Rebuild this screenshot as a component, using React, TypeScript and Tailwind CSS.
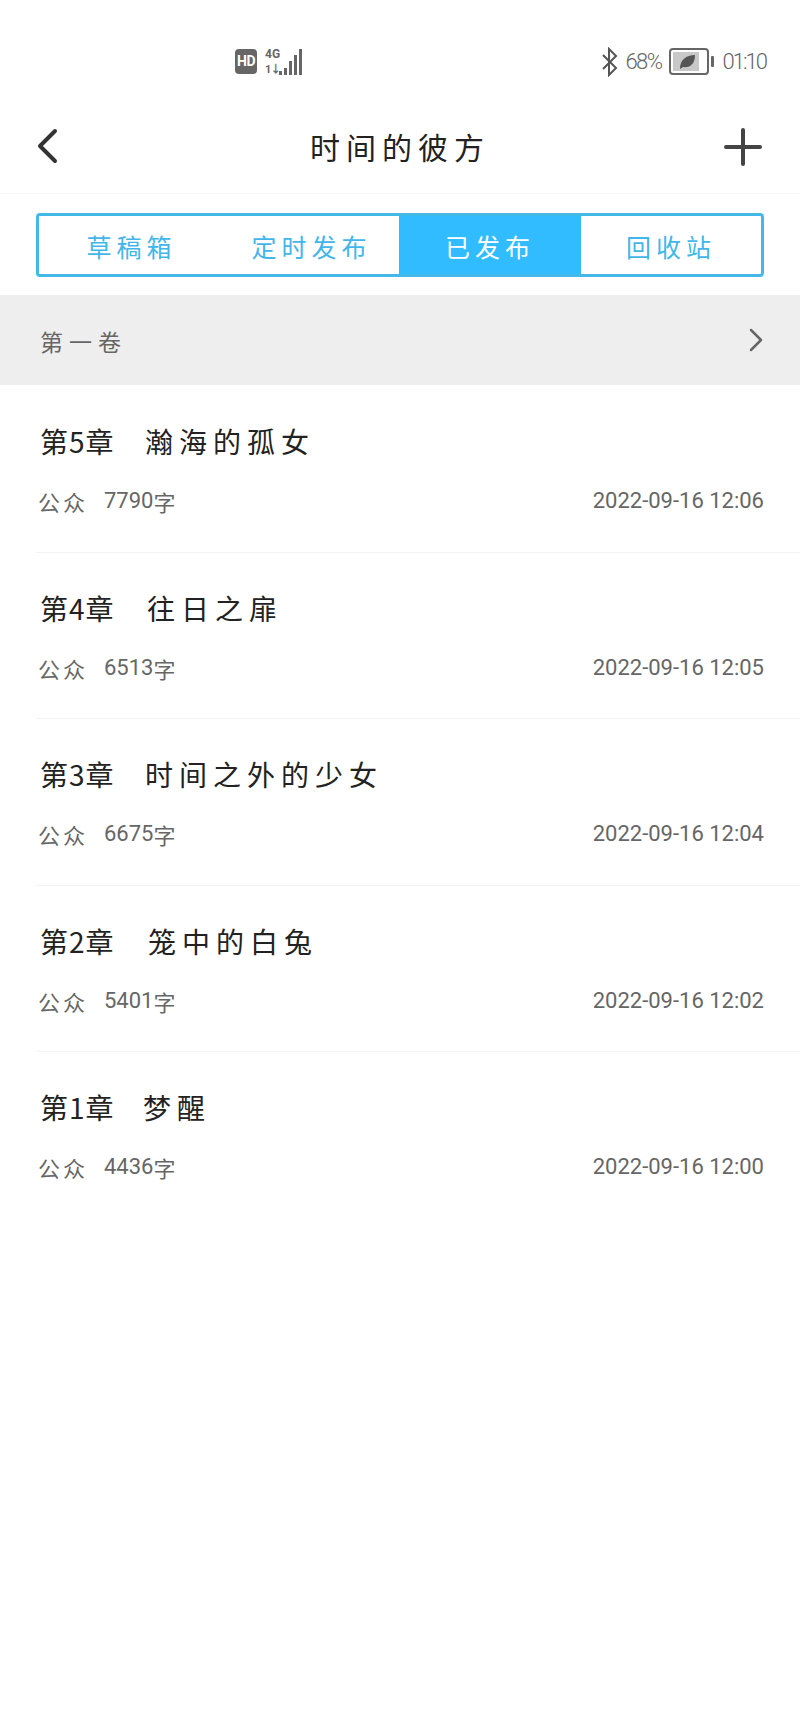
const rows = [
  { no: "第5章", w: "w-[105px]", name: "瀚海的孤女", count: "7790", date: "2022-09-16 12:06" },
  { no: "第4章", w: "w-[107px]", name: "往日之扉", count: "6513", date: "2022-09-16 12:05" },
  { no: "第3章", w: "w-[105px]", name: "时间之外的少女", count: "6675", date: "2022-09-16 12:04" },
  { no: "第2章", w: "w-[108px]", name: "笼中的白兔", count: "5401", date: "2022-09-16 12:02" },
  { no: "第1章", w: "w-[103px]", name: "梦醒", count: "4436", date: "2022-09-16 12:00" },
];

function StatusBar() {
  return (
    <div className="h-[94px] flex items-start justify-between pt-[47px] pl-[235px] pr-[34px] text-[#666]">
      <div className="flex items-center gap-[8px] h-[29px]">
        <span className="w-[22px] h-[25px] rounded-[4px] bg-[#666] text-white text-[14px] font-bold leading-[25px] text-center tracking-[-0.5px]">HD</span>
        <div className="relative w-[37px] h-[28px]">
          <span className="absolute left-0 top-[-1px] text-[12px] font-bold leading-[14px] text-[#666]">4G</span>
          <span className="absolute left-0 top-[15px] text-[11px] font-bold leading-[13px] tracking-[-1px] text-[#666]">1↓</span>
          <svg className="absolute left-0 top-0" width="37" height="28" viewBox="0 0 37 28" fill="#666">
            <rect x="14" y="23" width="3" height="4" />
            <rect x="19" y="20" width="3" height="7" />
            <rect x="24" y="13" width="3" height="14" />
            <rect x="29" y="7" width="3" height="20" />
            <rect x="34" y="1" width="3" height="26" />
          </svg>
        </div>
      </div>
      <div className="flex items-center h-[29px]">
        <svg width="18" height="30" viewBox="0 0 18 30" fill="none" stroke="#555" strokeWidth="2">
          <path d="M2 8 L15 21 L8 28 V2 L15 9 L2 22" />
        </svg>
        <span className="ml-[6px] text-[22px] font-light leading-[29px] tracking-[-1.5px]">68%</span>
        <svg className="ml-[7px]" width="46" height="27" viewBox="0 0 46 27" fill="none">
          <rect x="1" y="1" width="38" height="25" rx="3" stroke="#666" strokeWidth="2" />
          <rect x="4" y="4" width="26" height="19" fill="#c8c8c8" />
          <path d="M11 21 C11 12 17 7 26 7 C26 16 21 20 14 19 Z" fill="#555" />
          <rect x="42" y="8" width="3" height="11" rx="1" fill="#666" />
        </svg>
        <span className="ml-[8px] text-[22px] font-light leading-[29px] tracking-[-2px]">01:10</span>
      </div>
    </div>
  );
}

export default function App() {
  return (
    <div className="w-[800px] min-h-[1733px] bg-white font-['Roboto','Noto_Sans_CJK_SC',sans-serif]">
      <StatusBar />
      <div className="relative h-[100px] flex items-center justify-center border-b border-[#f7f7f7]">
        <svg className="absolute left-[35px] top-[34px]" width="24" height="36" viewBox="0 0 24 36" fill="none" stroke="#333" strokeWidth="4" strokeLinecap="round" strokeLinejoin="round">
          <path d="M20 3 L5 18 L20 33" />
        </svg>
        <span className="text-[30px] leading-none tracking-[6px] text-[#222] font-['Noto_Sans_CJK_SC',sans-serif] mt-[5px]">时间的彼方</span>
        <svg className="absolute left-[724px] top-[34px]" width="38" height="38" viewBox="0 0 38 38" fill="none" stroke="#444" strokeWidth="4" strokeLinecap="round">
          <path d="M19 2 V36 M2 19 H36" />
        </svg>
      </div>
      <div className="px-[36px] pt-[19px] pb-[18px]">
        <div className="h-[64px] border-[3px] border-[#45b8ea] rounded-[4px] grid grid-cols-[185px_175px_182px_1fr] font-['Noto_Sans_CJK_SC',sans-serif] text-[25px] tracking-[5px] text-[#42b6ea] overflow-hidden">
          <div className="flex items-center justify-center pt-[3px]">草稿箱</div>
          <div className="flex items-center justify-center pt-[3px]">定时发布</div>
          <div className="flex items-center justify-center pt-[3px] bg-[#30bcff] text-white">已发布</div>
          <div className="flex items-center justify-center pt-[3px]">回收站</div>
        </div>
      </div>
      <div className="h-[90px] bg-[#eeeeee] flex items-center justify-between pl-[40px] pr-[36px]">
        <span className="text-[23px] tracking-[6px] text-[#666] font-['Noto_Sans_CJK_SC',sans-serif] mt-[3px]">第一卷</span>
        <svg width="16" height="24" viewBox="0 0 16 24" fill="none" stroke="#666" strokeWidth="2.5" strokeLinecap="round" strokeLinejoin="round">
          <path d="M3 2 L13 12 L3 22" />
        </svg>
      </div>
      <div className="pt-[1px]">
        {rows.map((r, i) => (
          <div key={r.no} className="h-[166.5px] pl-[36px] flex flex-col">
            <div className="flex-1 flex flex-col pr-[36px]">
              <div className="mt-[36px] h-[38px] flex items-center text-[28px] leading-none text-[#222] font-['Noto_Sans_CJK_SC',sans-serif] pl-[4px]">
                <span className={r.w + " shrink-0 tracking-[1px]"}>{r.no}</span>
                <span className="tracking-[6px]">{r.name}</span>
              </div>
              <div className="mt-[26px] h-[30px] flex items-center justify-between text-[#666] text-[22px] leading-none">
                <div className="flex items-center pl-[2px]">
                  <span className="w-[66px] tracking-[3px] text-[22px] font-['Noto_Sans_CJK_SC',sans-serif]">公众</span>
                  <span>{r.count}</span>
                  <span className="text-[22px] font-['Noto_Sans_CJK_SC',sans-serif]">字</span>
                </div>
                <span>{r.date}</span>
              </div>
            </div>
            {i < 4 && <div className="h-[1px] bg-[#f3f3f3]" />}
          </div>
        ))}
      </div>
    </div>
  );
}
